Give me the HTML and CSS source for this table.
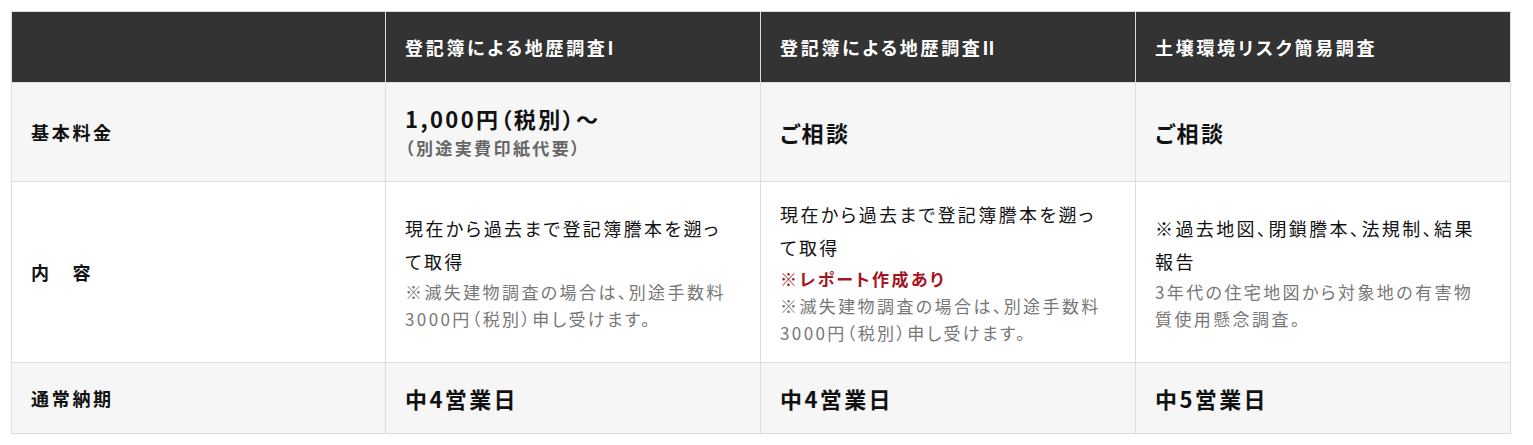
FILE: index.html
```html
<!DOCTYPE html>
<html lang="ja">
<head>
<meta charset="utf-8">
<link rel="stylesheet" href="styles.css">
</head>
<body>
<div class="wrap">
<table class="price-table">
  <colgroup>
    <col class="col-label">
    <col class="col-plan">
    <col class="col-plan">
    <col class="col-plan">
  </colgroup>
  <thead>
    <tr>
      <th class="corner"></th>
      <th>登記簿による地歴調査I</th>
      <th>登記簿による地歴調査<span class="roman">II</span></th>
      <th>土壌環境リスク簡易調査</th>
    </tr>
  </thead>
  <tbody>
    <tr class="row-gray row-fee">
      <th class="label">基本料金</th>
      <td><span class="price">1,000円（税別）〜</span><span class="price-sub">（別途実費印紙代要）</span></td>
      <td><span class="price">ご相談</span></td>
      <td><span class="price">ご相談</span></td>
    </tr>
    <tr class="row-white row-content">
      <th class="label">内　容</th>
      <td><p class="main">現在から過去まで登記簿謄本を遡って取得</p><p class="note">※滅失建物調査の場合は、別途手数料3000円（税別）申し受けます。</p></td>
      <td><p class="main">現在から過去まで登記簿謄本を遡って取得</p><p class="note"><span class="red">※レポート作成あり</span></p><p class="note">※滅失建物調査の場合は、別途手数料3000円（税別）申し受けます。</p></td>
      <td><p class="main">※過去地図、閉鎖謄本、法規制、結果報告</p><p class="note">3年代の住宅地図から対象地の有害物質使用懸念調査。</p></td>
    </tr>
    <tr class="row-gray row-term">
      <th class="label">通常納期</th>
      <td><span class="term">中4営業日</span></td>
      <td><span class="term">中4営業日</span></td>
      <td><span class="term">中5営業日</span></td>
    </tr>
  </tbody>
</table>
</div>
</body>
</html>
```

FILE: styles.css
```css
html, body {
  margin: 0;
  padding: 0;
  background: #fff;
}
body {
  font-family: "Noto Sans CJK JP", "Noto Sans", sans-serif;
  color: #111;
  font-feature-settings: "palt";
}
.wrap {
  padding: 11px 0 0 11px;
}
.price-table {
  width: 1500px;
  border-collapse: collapse;
  table-layout: fixed;
  border: 1px solid #ddd;
}
.col-label { width: 374px; }
.col-plan { width: 375px; }
.price-table th,
.price-table td {
  border: 1px solid #ddd;
  text-align: left;
  vertical-align: middle;
  padding: 0 30px 0 19px;
  letter-spacing: 0.15em;
  box-sizing: border-box;
}
.price-table thead th {
  background: #333;
  color: #fff;
  font-size: 18px;
  font-weight: 700;
  line-height: 1.8;
  height: 71px;
}
.roman {
  letter-spacing: 0;
}
.row-gray th, .row-gray td { background: #f6f6f6; }
.row-white th, .row-white td { background: #fff; }
.label {
  font-size: 18px;
  font-weight: 700;
  line-height: 1.8;
}
.row-fee th, .row-fee td { height: 99px; }
.row-content th, .row-content td { height: 181px; }
.row-term th, .row-term td { height: 71px; }
.price {
  display: block;
  font-size: 22px;
  font-weight: 700;
  line-height: 1.4;
}
.price-sub {
  display: block;
  font-size: 17px;
  font-weight: 700;
  color: #666;
  line-height: 1.6;
}
.main {
  margin: 0;
  font-size: 18px;
  line-height: 1.85;
}
.note {
  margin: 0;
  font-size: 17px;
  line-height: 1.6;
  color: #777;
}
.red {
  color: #a5141f;
  font-weight: 700;
}
.term {
  font-size: 22px;
  font-weight: 700;
  line-height: 1.5;
}
```
